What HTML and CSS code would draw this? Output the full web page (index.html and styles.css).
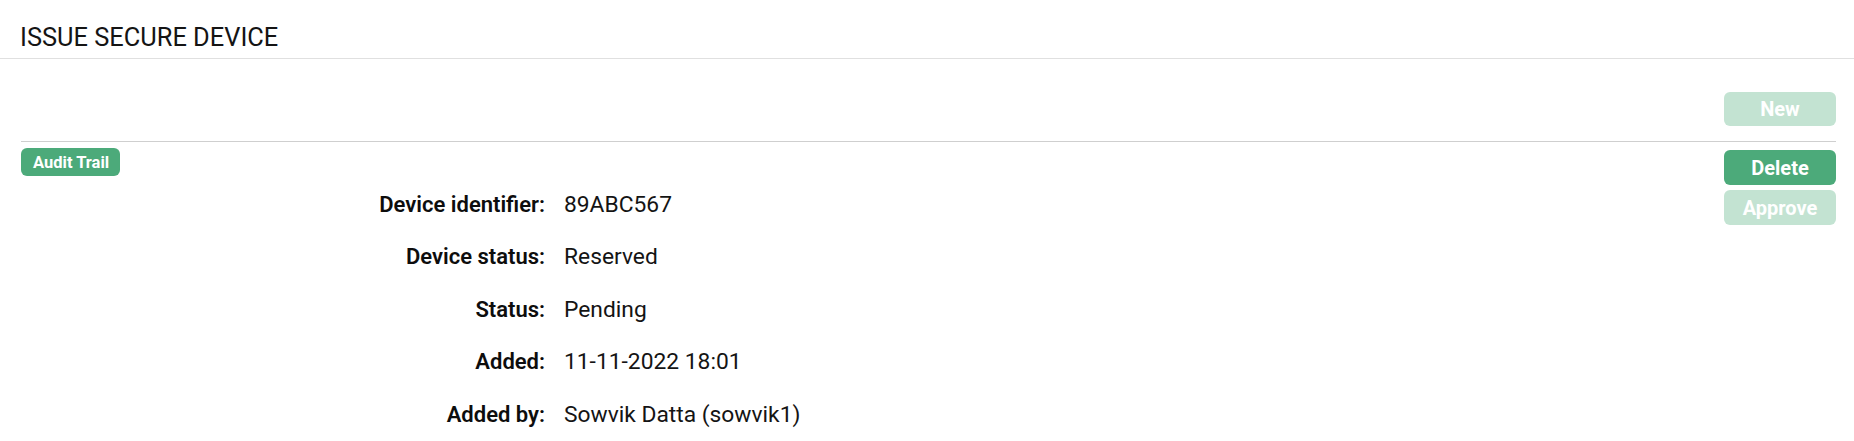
FILE: index.html
```html
<!DOCTYPE html>
<html>
<head>
<meta charset="utf-8">
<link rel="stylesheet" href="styles.css">
</head>
<body>
<div class="header"><h1 class="title">ISSUE SECURE DEVICE</h1></div>
<div class="page">
  <div class="toolbar">
    <button class="btn btn-big disabled">New</button>
  </div>
  <div class="main">
    <div class="left">
      <button class="btn btn-small">Audit Trail</button>
      <div class="details">
        <div class="label">Device identifier:</div><div class="value">89ABC567</div>
        <div class="label">Device status:</div><div class="value">Reserved</div>
        <div class="label">Status:</div><div class="value">Pending</div>
        <div class="label">Added:</div><div class="value">11-11-2022 18:01</div>
        <div class="label">Added by:</div><div class="value">Sowvik Datta (sowvik1)</div>
      </div>
    </div>
    <div class="actions">
      <button class="btn btn-big">Delete</button>
      <button class="btn btn-big disabled">Approve</button>
    </div>
  </div>
</div>
</body>
</html>
```
FILE: styles.css
```css
* { box-sizing: border-box; }
body {
  margin: 0;
  font-family: Roboto, "Liberation Sans", sans-serif;
  color: #111;
  background: #fff;
}
.header {
  height: 59px;
  padding: 23px 20px 0;
  border-bottom: 1px solid #e0e0e0;
}
.title {
  margin: 0;
  font-size: 25.4px;
  font-weight: 400;
  line-height: 29px;
  color: #141414;
}
.page {
  padding: 0 18px 0 21px;
}
.toolbar {
  display: flex;
  justify-content: flex-end;
  padding: 33px 0 15px;
  border-bottom: 1px solid #cfcfcf;
}
.btn {
  font-family: Roboto, "Liberation Sans", sans-serif;
  border: none;
  background: #4caa7a;
  color: #fff;
  font-weight: 700;
  cursor: pointer;
  padding: 0;
}
.btn.disabled { background: #c3e3d2; }
.btn-big {
  width: 112px;
  height: 34px;
  border-radius: 6px;
  font-size: 20px;
}
.btn-small {
  height: 28px;
  padding: 0 11px 0 12px;
  border-radius: 6px;
  font-size: 16.5px;
}
.main {
  display: flex;
  justify-content: space-between;
}
.left {
  padding-top: 6px;
}
.details {
  display: grid;
  grid-template-columns: 524px auto;
  column-gap: 19px;
  margin-top: 3px;
  font-size: 22px;
  line-height: 52.4px;
}
.label {
  text-align: right;
  font-weight: 600;
  color: #0d0d0d;
}
.value {
  font-size: 22.8px;
  color: #141414;
}
.actions {
  display: flex;
  flex-direction: column;
  gap: 5px;
  padding-top: 8px;
}
.actions .btn-big { height: 35px; }
```
